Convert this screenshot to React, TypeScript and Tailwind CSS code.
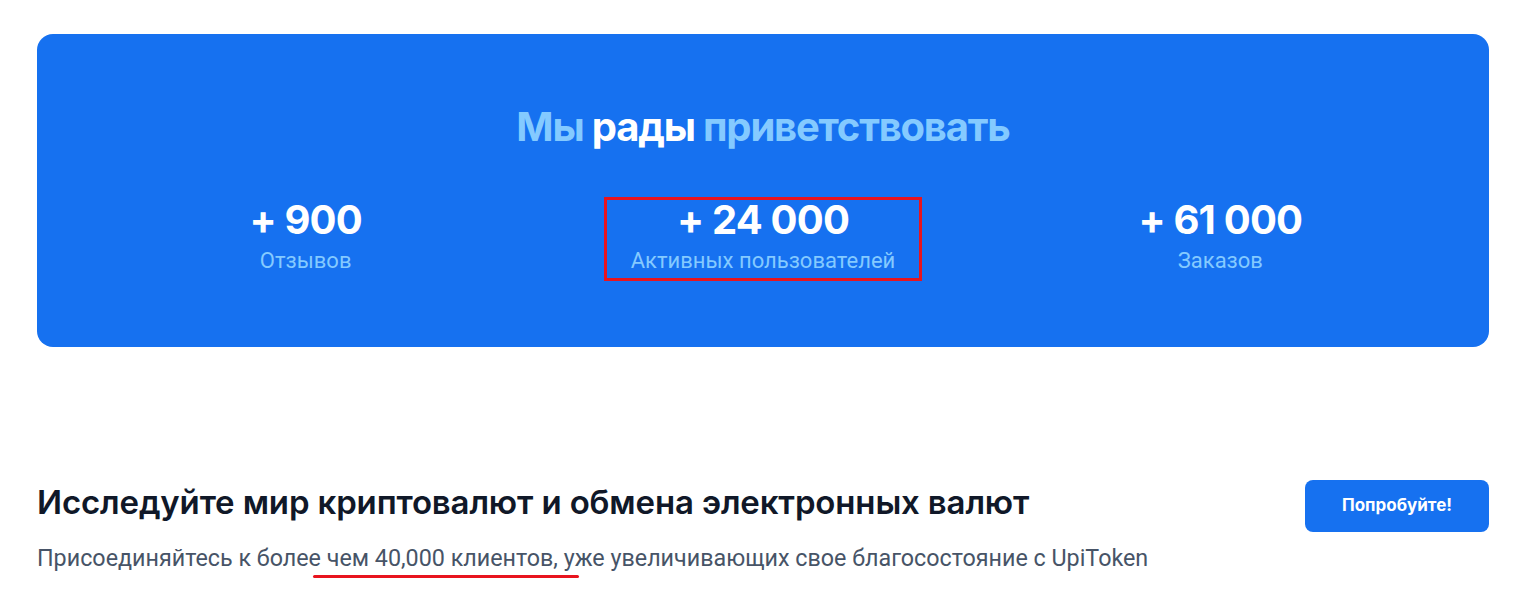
import React from 'react';

const stats = [
  { value: '+ 900', label: 'Отзывов' },
  { value: '+ 24 000', label: 'Активных пользователей', marked: true },
  { value: '+ 61 000', label: 'Заказов' },
];

function Stat({ value, label, marked }: { value: string; label: string; marked?: boolean }) {
  return (
    <div className="flex justify-center">
      <div
        className={`flex flex-col items-center ${
          marked ? 'border-[3px] border-[#e8141e] px-[24px] pb-[3px]' : 'pt-[3px] pb-[6px]'
        }`}
      >
        <span className="text-[40px] font-bold leading-[40px] tracking-[-0.02em] text-white">{value}</span>
        <span className="mt-[7px] font-['Roboto',sans-serif] text-[22px] leading-[28px] text-[#84caff]">
          {label}
        </span>
      </div>
    </div>
  );
}

export default function App() {
  return (
    <div className="min-h-[603px] bg-white pl-[37px] pr-[28px] pt-[34px] font-['Inter',sans-serif]">
      <section className="flex h-[313px] flex-col items-center rounded-2xl bg-[#1671f0] px-[40px] pt-[69px]">
        <h1 className="text-[40px] font-bold leading-[48px] tracking-[-0.03em] text-[#84caff]">
          Мы <span className="text-white">рады</span> приветствовать
        </h1>
        <div className="mt-[46px] grid w-full grid-cols-3">
          {stats.map((s) => (
            <Stat key={s.value} {...s} />
          ))}
        </div>
      </section>

      <section className="mt-[135px] flex items-start justify-between">
        <div>
          <h2 className="text-[33px] font-semibold leading-[40px] tracking-[-0.15px] text-[#101828]">
            Исследуйте мир криптовалют и обмена электронных валют
          </h2>
          <p className="mt-[21px] font-['Roboto',sans-serif] text-[23.3px] leading-[30px] text-[#475467]">
            Присоединяйтесь к более{' '}
            <span className="relative">
              чем 40,000 клиентов,
              <span className="absolute -left-[14px] -right-[21px] -bottom-[6px] h-[3px] rounded-full bg-[#e8141e]" />
            </span>{' '}
            уже увеличивающих свое благосостояние с UpiToken
          </p>
        </div>
        <button className="-mt-[2px] h-[52px] w-[184px] rounded-lg bg-[#1671f0] text-[17px] font-bold text-white">
          Попробуйте!
        </button>
      </section>
    </div>
  );
}
